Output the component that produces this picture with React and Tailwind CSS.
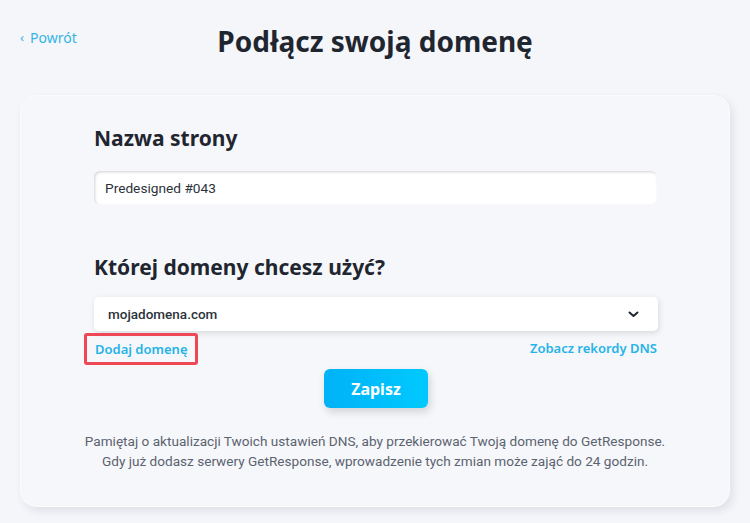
import React, { useState } from 'react';

const Chevron = () => (
  <svg width="11" height="7" viewBox="0 0 11 7" fill="none">
    <path d="M1.5 1.5l4 3.5 4-3.5" stroke="#1f2630" strokeWidth="2" strokeLinecap="round" strokeLinejoin="round" />
  </svg>
);

const App = () => {
  const [pageName, setPageName] = useState('Predesigned #043');

  return (
    <div className="min-h-[523px] w-[750px] bg-[#f5f6fa] font-['Roboto',sans-serif] text-[#1f2630] overflow-hidden">
      {/* Header */}
      <div className="relative h-[95px]">
        <a className="absolute left-[20px] top-[27px] flex items-center gap-[6px] text-[14px] text-[#36b4e6] font-['Noto_Sans',sans-serif]">
          <span className="text-[13px]">‹</span>
          <span>Powrót</span>
        </a>
        <h1 className="pt-[20px] text-center text-[28px] font-bold font-['Noto_Sans',sans-serif]">
          Podłącz swoją domenę
        </h1>
      </div>

      {/* Card */}
      <div className="mx-[20px] h-[412px] rounded-[16px] bg-[#f6f7fa] shadow-[3px_4px_8px_rgba(30,40,60,0.10)] border border-[#fbfbfd]">
        <div className="px-[73px] pt-[27px]">
          <h2 className="text-[21px] font-bold font-['Noto_Sans',sans-serif] leading-[30px]">Nazwa strony</h2>
          <input
            value={pageName}
            onChange={(e) => setPageName(e.target.value)}
            className="mt-[18px] h-[34px] w-[563px] rounded-[6px] bg-white px-[11px] text-[13.7px] text-[#2d333b] outline-none shadow-[inset_1px_1px_3px_rgba(0,0,0,0.18)]"
          />

          <h2 className="mt-[47px] text-[21px] font-bold font-['Noto_Sans',sans-serif] leading-[30px]">Której domeny chcesz użyć?</h2>
          <div className="mt-[15px] flex h-[34px] w-[564px] items-center justify-between rounded-[5px] bg-white pl-[14px] pr-[19px] shadow-[1px_2px_6px_rgba(0,0,0,0.12)]">
            <span className="text-[13.5px] font-medium text-[#2d333b]">mojadomena.com</span>
            <Chevron />
          </div>

          <div className="mt-[2px] flex w-[563px] items-center justify-between">
            <div className="-ml-[10px] rounded-[3px] border-[3px] border-[#ee4755] px-[8px] py-[1px]">
              <span className="text-[13px] font-semibold text-[#25b3e8] font-['Noto_Sans',sans-serif]">Dodaj domenę</span>
            </div>
            <span className="text-[13px] font-semibold text-[#25b3e8] font-['Noto_Sans',sans-serif]">Zobacz rekordy DNS</span>
          </div>

          <div className="mt-[4px] flex w-[564px] justify-center">
            <button className="h-[39px] w-[104px] rounded-[6px] bg-gradient-to-r from-[#00b2f7] to-[#00c9ff] text-[16px] font-bold text-white font-['Noto_Sans',sans-serif] shadow-[2px_4px_8px_rgba(0,0,0,0.15)]">
              Zapisz
            </button>
          </div>
        </div>

        <p className="mt-[23px] text-center text-[13.6px] leading-[20px] text-[#5b6370]">
          Pamiętaj o aktualizacji Twoich ustawień DNS, aby przekierować Twoją domenę do GetResponse.
          <br />
          Gdy już dodasz serwery GetResponse, wprowadzenie tych zmian może zająć do 24 godzin.
        </p>
      </div>
    </div>
  );
};

export default App;
